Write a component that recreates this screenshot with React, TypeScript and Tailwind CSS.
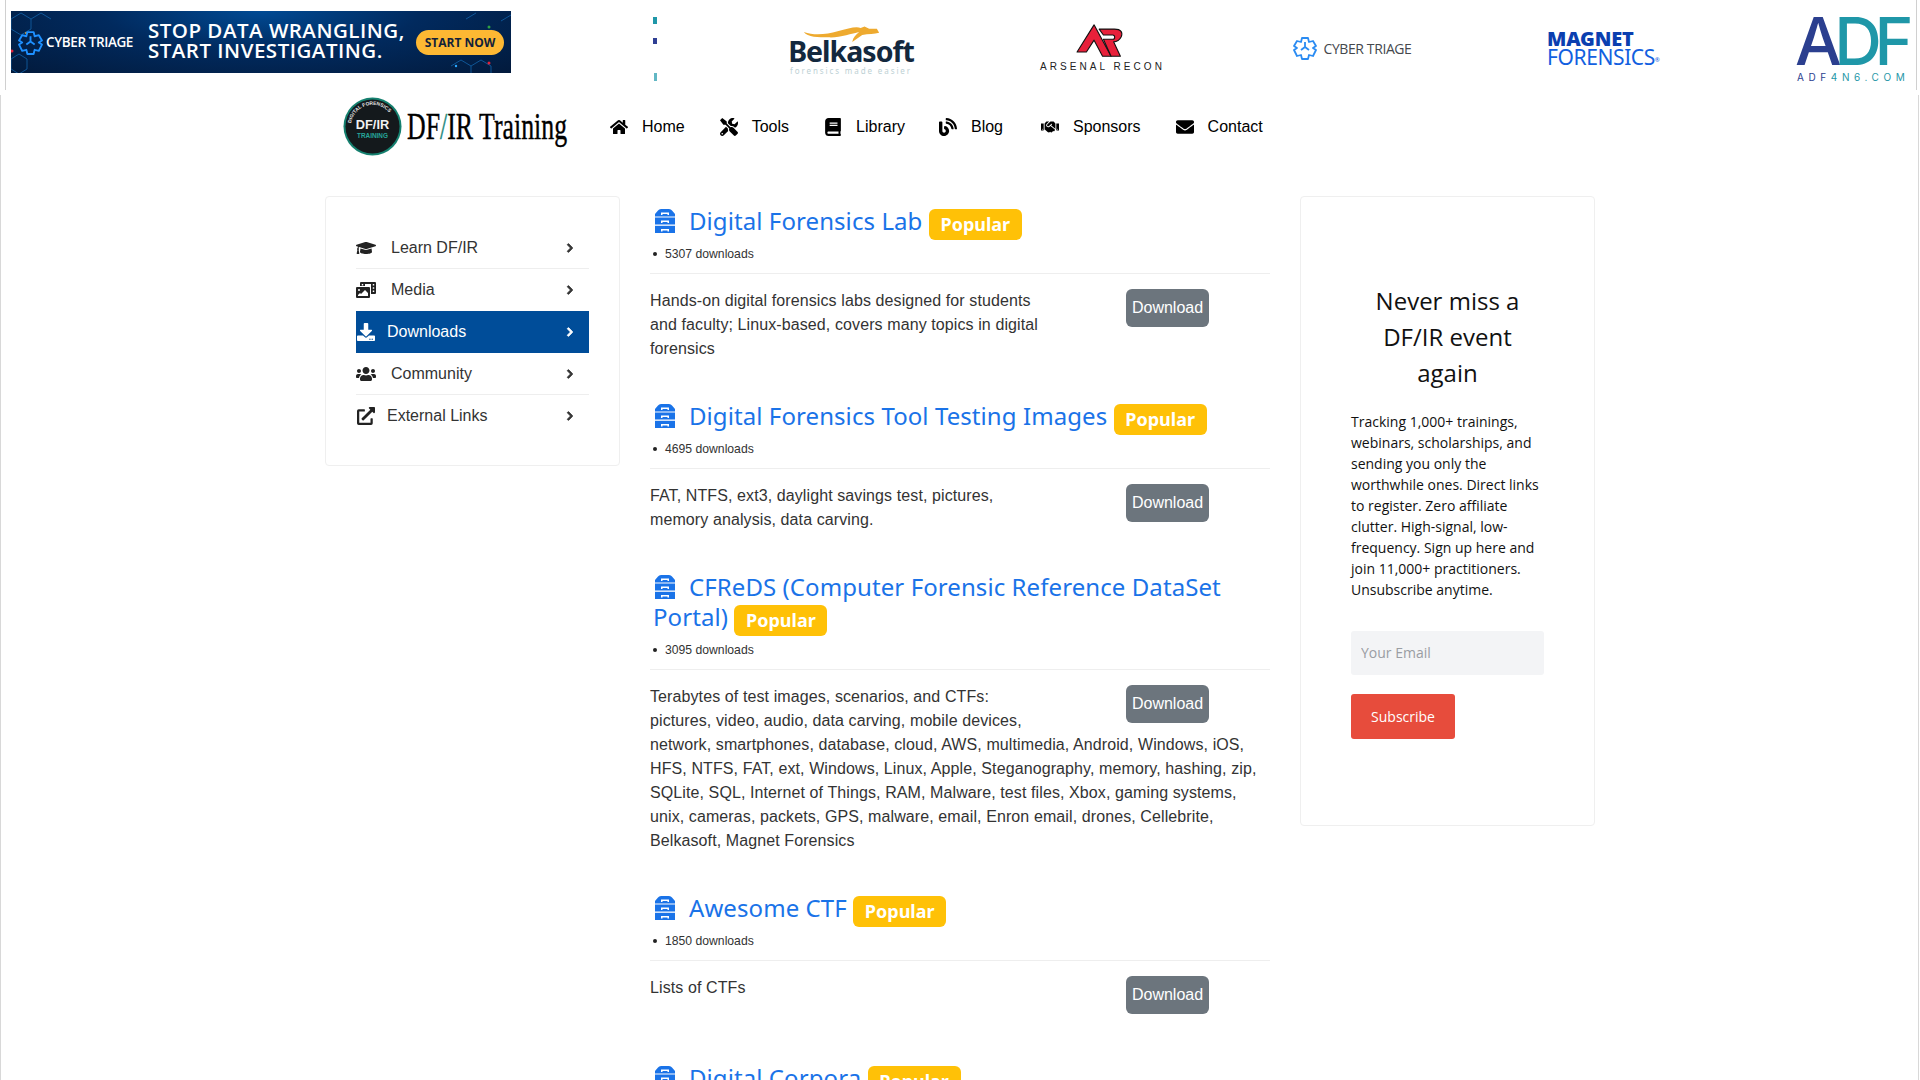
import { FaBlog, FaBook, FaChevronRight, FaDownload, FaEnvelope, FaExternalLinkAlt, FaGraduationCap, FaHandshake, FaHome, FaPhotoVideo, FaTools, FaUsers } from "react-icons/fa";

const navLinks = [
  { label: "Home", icon: FaHome, nudge: "" },
  { label: "Tools", icon: FaTools, nudge: "" },
  { label: "Library", icon: FaBook, nudge: "" },
  { label: "Blog", icon: FaBlog, nudge: "-ml-[1px]" },
  { label: "Sponsors", icon: FaHandshake, nudge: "ml-[3px]" },
  { label: "Contact", icon: FaEnvelope, nudge: "" },
];

const sideLinks = [
  { label: "Learn DF/IR", icon: FaGraduationCap, textX: "ml-[15px]" },
  { label: "Media", icon: FaPhotoVideo, textX: "ml-[15px]" },
  { label: "Downloads", icon: FaDownload, textX: "ml-[11px]", active: true },
  { label: "Community", icon: FaUsers, textX: "ml-[15px]" },
  { label: "External Links", icon: FaExternalLinkAlt, textX: "ml-[11px]" },
];

const downloads = [
  {
    title: "Digital Forensics Lab",
    count: "5307 downloads",
    text: "Hands-on digital forensics labs designed for students and faculty; Linux-based, covers many topics in digital forensics",
  },
  {
    title: "Digital Forensics Tool Testing Images",
    count: "4695 downloads",
    text: "FAT, NTFS, ext3, daylight savings test, pictures, memory analysis, data carving.",
  },
  {
    title: "CFReDS (Computer Forensic Reference DataSet Portal)",
    count: "3095 downloads",
    text: "Terabytes of test images, scenarios, and CTFs: pictures, video, audio, data carving, mobile devices, network, smartphones, database, cloud, AWS, multimedia, Android, Windows, iOS, HFS, NTFS, FAT, ext, Windows, Linux, Apple, Steganography, memory, hashing, zip, SQLite, SQL, Internet of Things, RAM, Malware, test files, Xbox, gaming systems, unix, cameras, packets, GPS, malware, email, Enron email, drones, Cellebrite, Belkasoft, Magnet Forensics",
  },
  { title: "Awesome CTF", count: "1850 downloads", text: "Lists of CTFs" },
  { title: "Digital Corpora", count: "1640 downloads", text: "Disk images, memory dumps and network packet captures." },
];

function CabinetIcon() {
  return (
    <svg viewBox="0 0 20 24" className="inline-block w-[20px] h-[24px] align-[-3px] fill-[#1a73e8]">
      <path d="M0 7.5V5l3-3.5Q4 0 6 0h8q2 0 3 1.5L20 5v2.5z" />
      <rect y="8.5" width="20" height="7" />
      <rect y="16.8" width="20" height="7.2" />
      <path d="M6 6V3.5h8V6h-1.5V5h-5v1zM6 14v-2.5h8V14h-1.5v-1h-5v1zM6 22.5V20h8v2.5h-1.5v-1h-5v1z" fill="#fff" />
    </svg>
  );
}

function TriageMark({ color, size }: { color: string; size: number }) {
  return (
    <svg viewBox="0 0 24 24" width={size} height={size} fill="none" stroke={color} strokeWidth="1.8" strokeLinejoin="round">
      <path d="M9 2h6l1 4 4-1 3 5-3 2 3 2-3 6-4-1-1 4H9l-1-4-4 1-3-6 3-2-3-2 3-5 4 1z" />
      <path d="M12 6v5l-4 3M12 11l4 3" />
    </svg>
  );
}

function Banner() {
  return (
    <div className="relative w-[500px] h-[62px] shrink-0 overflow-hidden flex items-center bg-[radial-gradient(ellipse_at_50%_0%,#004a94_0%,#012a5e_45%,#021a3c_100%)] text-white font-['Open_Sans',sans-serif]">
      <svg viewBox="0 0 500 62" className="absolute inset-0 w-full h-full" fill="none" stroke="#1262a8" strokeWidth="0.8">
        <path d="M0 8l10-6 10 6v10l-10 6-10-6zM20 8l10-6 10 6M0 48l8-5 8 5v10l-8 5-8-5z" />
        <path d="M440 55l10-6 10 6v10M460 55l10-6 10 6v10M470 25l10-6 10 6v12l-10 6-10-6zM490 10l10-6 10 6M455 8l10-6" />
        <circle cx="478" cy="16" r="1.5" fill="#2ea043" stroke="none" />
        <circle cx="478" cy="52" r="1.5" fill="#e0213a" stroke="none" />
        <circle cx="445" cy="55" r="1.2" fill="#2aa8ff" stroke="none" />
        <circle cx="15" cy="22" r="1" fill="#e0a030" stroke="none" />
        <circle cx="1" cy="40" r="1.5" fill="#e0213a" stroke="none" />
      </svg>
      <div className="relative ml-[7px] flex items-center gap-[3px]">
        <TriageMark color="#1e90ff" size={25} />
        <span className="text-[13.5px] font-semibold tracking-[-0.4px] whitespace-nowrap">CYBER TRIAGE</span>
      </div>
      <div className="relative ml-[15px] -mt-[5px] text-[20.5px] leading-[20px] font-semibold tracking-[0.5px] whitespace-nowrap">
        <div>STOP DATA WRANGLING,</div>
        <div>START INVESTIGATING.</div>
      </div>
      <span className="absolute left-[405px] top-[19px] w-[88px] h-[25px] rounded-full bg-[#fdb833] text-[#12213a] text-[12px] font-bold flex items-center justify-center whitespace-nowrap">START NOW</span>
    </div>
  );
}

function AdfFragment() {
  return (
    <div className="w-[215px] shrink-0 h-[90px] relative">
      <span className="absolute left-[142px] top-[17px] w-[4px] h-[7px] bg-[#1f97a8]" />
      <span className="absolute left-[142px] top-[38px] w-[4px] h-[6px] bg-[#2f3f94]" />
      <span className="absolute left-[143px] top-[73px] w-[3px] h-[8px] bg-[#62b7c4]" />
    </div>
  );
}

function Belkasoft() {
  return (
    <div className="w-[250px] shrink-0 flex flex-col items-center pt-[25px] h-[90px]">
      <svg viewBox="0 0 130 24" className="w-[100px] h-[20px] -mb-[8px] ml-[4px]">
        <path d="M1 8c14 5 30 3 44-1 14-3 24-7 30-4l5-2 6 3 10 0 3 5c-6 2-14 1-22 3l-13 9c1-6 5-10 9-13-10 2-26 8-40 7C20 15 6 15 1 8z" fill="#eeaa2f" />
      </svg>
      <span className="font-['Noto_Sans',sans-serif] font-bold text-[28.5px] leading-[28px] text-[#13283e] tracking-[-1px]">Belkasoft</span>
      <span className="font-['Noto_Sans',sans-serif] text-[8px] leading-[10px] mt-[1px] text-[#bcd0d4] tracking-[1.9px] whitespace-nowrap">forensics made easier</span>
    </div>
  );
}

function Arsenal() {
  return (
    <div className="w-[250px] shrink-0 flex flex-col items-center pt-[24px] pl-[3px] h-[90px]">
      <svg viewBox="0 0 56 40" className="w-[56px] h-[34px] ml-[-6px]">
        <path d="M1 33L21 1l20 37H31L21 19l-9 14z" fill="#e8203a" stroke="#111" strokeWidth="1.3" strokeLinejoin="round" />
        <path d="M27 6h18c8 0 10 4 8 9-2 4-5 6-9 6l8 17H41l-9-20h11c3 0 3-5 0-5H32z" fill="#e8203a" stroke="#111" strokeWidth="1.3" strokeLinejoin="round" />
      </svg>
      <span className="font-['Liberation_Sans',sans-serif] text-[10px] leading-[12px] mt-[3px] text-[#222] tracking-[3.05px] whitespace-nowrap">ARSENAL RECON</span>
    </div>
  );
}

function CyberTriage() {
  return (
    <div className="w-[250px] shrink-0 h-[90px] flex items-center justify-center gap-[6px] pt-[6px] pl-[3px]">
      <TriageMark color="#2a8bf2" size={24} />
      <span className="font-['Open_Sans',sans-serif] text-[14px] text-[#45484d] tracking-[-0.4px] whitespace-nowrap">CYBER TRIAGE</span>
    </div>
  );
}

function Magnet() {
  return (
    <div className="w-[250px] shrink-0 h-[90px] flex flex-col items-start pl-[71px] pt-[30px] font-['Noto_Sans',sans-serif]">
      <span className="font-black text-[20px] leading-[18px] text-[#0b3fb0] tracking-[-0.2px]">MAGNET</span>
      <span className="text-[21px] leading-[19px] tracking-[-0.4px] text-[#1260e0] whitespace-nowrap">FORENSICS<sup className="text-[6px]">®</sup></span>
    </div>
  );
}

function Adf() {
  return (
    <div className="w-[120px] shrink-0 h-[90px] ml-[59px] pt-[15px] pl-[10px]">
      <div className="flex items-end h-[52px] font-['Inter',sans-serif] font-medium text-[66px] leading-[52px] tracking-[-7.5px]">
        <span className="text-[#2b3f8f]">A</span>
        <span className="text-[#1f97a8]">DF</span>
      </div>
      <div className="font-['Inter',sans-serif] text-[10px] leading-[12px] mt-[4px] ml-[2px] text-[#2b3f8f] tracking-[4.6px] whitespace-nowrap">
        ADF<span className="text-[#1f97a8]">4N6.COM</span>
      </div>
    </div>
  );
}

function TopAds() {
  return (
    <div className="relative h-[90px] ml-[5px] mr-[3px] border-l border-r border-[#d0d0d0] flex items-start overflow-hidden">
      <div className="ml-[5px] mt-[11px] shrink-0">
        <Banner />
      </div>
      <AdfFragment />
      <Belkasoft />
      <Arsenal />
      <CyberTriage />
      <Magnet />
      <Adf />
    </div>
  );
}

function SiteLogo() {
  return (
    <div className="flex items-center w-[267px] shrink-0">
      <svg viewBox="0 0 60 60" className="w-[59px] h-[59px] shrink-0">
        <circle cx="30" cy="30" r="29.5" fill="#15806f" />
        <circle cx="30" cy="30" r="27.5" fill="#14191c" />
        <path id="logoarc" d="M8 30a22 22 0 0 1 44 0" fill="none" />
        <text fontSize="5" fontWeight="700" fill="#e7e7e7" fontFamily="Liberation Sans">
          <textPath href="#logoarc" startOffset="5%">DIGITAL FORENSICS</textPath>
        </text>
        <text x="30" y="33" textAnchor="middle" fontSize="13" fontWeight="700" fill="#f2f2f2" fontFamily="Liberation Sans">DF/IR</text>
        <text x="30" y="42" textAnchor="middle" fontSize="6.5" fontWeight="700" fill="#26a69a" fontFamily="Liberation Sans">TRAINING</text>
      </svg>
      <span className="ml-[5px] font-['Liberation_Serif',serif] text-[38px] leading-none text-black whitespace-nowrap origin-left scale-x-[0.68] [-webkit-text-stroke:0.4px_black]">
        DF<span className="text-[#1f8a80] [-webkit-text-stroke:0.4px_#1f8a80]">/</span>IR Training
      </span>
    </div>
  );
}

function TopNav() {
  return (
    <nav className="h-[90px] flex items-center pl-[342px] pb-[28px] font-['Liberation_Sans',sans-serif]">
      <SiteLogo />
      <ul className="flex items-center gap-[35px] pt-[2px] text-[16px] text-black">
        {navLinks.map((link) => (
          <li key={link.label} className={`flex items-center gap-[14px] ${link.nudge}`}>
            <link.icon className="text-[18px] text-black" />
            <span>{link.label}</span>
          </li>
        ))}
      </ul>
    </nav>
  );
}

function SideMenu() {
  return (
    <aside className="w-[295px] h-[270px] shrink-0 border border-[#efefef] rounded-[4px] px-[30px] pt-[30px] font-['Liberation_Sans',sans-serif]">
      <ul className="text-[16px] text-[#333]">
        {sideLinks.map((link, i) => (
          <li
            key={link.label}
            className={`h-[42px] flex items-center pr-[14px] ${link.active ? "bg-[#004d99] text-white" : ""} ${i === 0 || i === 3 ? "border-b border-[#eeeeee]" : ""}`}
          >
            <link.icon className={`w-[20px] text-[18px] shrink-0 ${link.active ? "text-white" : "text-[#222]"}`} />
            <span className={link.textX}>{link.label}</span>
            <FaChevronRight className="ml-auto text-[10px] stroke-current [stroke-width:50]" />
          </li>
        ))}
      </ul>
    </aside>
  );
}

function DownloadEntry({ title, count, text }: { title: string; count: string; text: string }) {
  return (
    <article className="mb-[40px]">
      <h2 className="px-[3px] font-['Noto_Sans',sans-serif] text-[24px] leading-[30px] tracking-[0.08px] text-[#1a73e8]">
        <span className="ml-[2px] mr-[14px]">
          <CabinetIcon />
        </span>
        {title}{" "}
        <span className="inline-block align-[-1px] px-[11.7px] h-[31px] rounded-[6px] bg-[#ffc107] text-white text-[18px] leading-[31px] font-bold tracking-normal">Popular</span>
      </h2>
      <ul className="pl-[3px] mt-[5px] text-[12.2px] leading-[18px] text-[#333] font-['Liberation_Sans',sans-serif]">
        <li className="flex items-center gap-[8px]">
          <span className="w-[4px] h-[4px] rounded-full bg-[#222]" />
          {count}
        </li>
      </ul>
      <hr className="mt-[10px] mb-[15px] border-[#eeeeee]" />
      <div className="flow-root font-['Liberation_Sans',sans-serif] text-[16px] leading-[24px] tracking-[0.1px] text-[#333]">
        <div className="float-right w-[230px] h-[47px]">
          <button className="block ml-[86px] w-[83px] h-[38px] rounded-[6px] bg-[#6c757d] text-white text-[16px] tracking-normal">Download</button>
        </div>
        {text}
      </div>
    </article>
  );
}

function Newsletter() {
  return (
    <aside className="w-[295px] h-[630px] shrink-0 border border-[#efefef] rounded-[4px] pl-[50px] pr-[50px] pt-[86px] font-['Open_Sans',sans-serif] text-[#111]">
      <h3 className="text-[24px] leading-[36px] text-center">Never miss a DF/IR event again</h3>
      <p className="mt-[19.5px] text-[14px] leading-[21px]">
        Tracking 1,000+ trainings, webinars, scholarships, and sending you only the worthwhile ones. Direct links to register. Zero affiliate clutter. High-signal, low-frequency. Sign up here and join 11,000+ practitioners. Unsubscribe anytime.
      </p>
      <input
        placeholder="Your Email"
        className="mt-[31px] block w-[193px] h-[44px] px-[10px] rounded-[3px] bg-[#f3f4f6] text-[14px] outline-none placeholder:text-[#9a9da3]"
      />
      <button className="mt-[19px] block w-[104px] h-[45px] rounded-[3px] bg-[#e74c3c] text-white text-[14px]">Subscribe</button>
    </aside>
  );
}

export default function App() {
  return (
    <div className="h-[1080px] overflow-hidden bg-white">
      <TopAds />
      <div className="h-[990px] mt-[5px] border-l border-r border-[#d8d8d8] mr-[1px] overflow-hidden">
        <TopNav />
        <div className="flex items-start mt-[11px] pl-[324px]">
          <SideMenu />
          <main className="w-[620px] ml-[30px] mr-[30px] pt-[10px] shrink-0">
            {downloads.map((d) => (
              <DownloadEntry key={d.title} {...d} />
            ))}
          </main>
          <Newsletter />
        </div>
      </div>
    </div>
  );
}
